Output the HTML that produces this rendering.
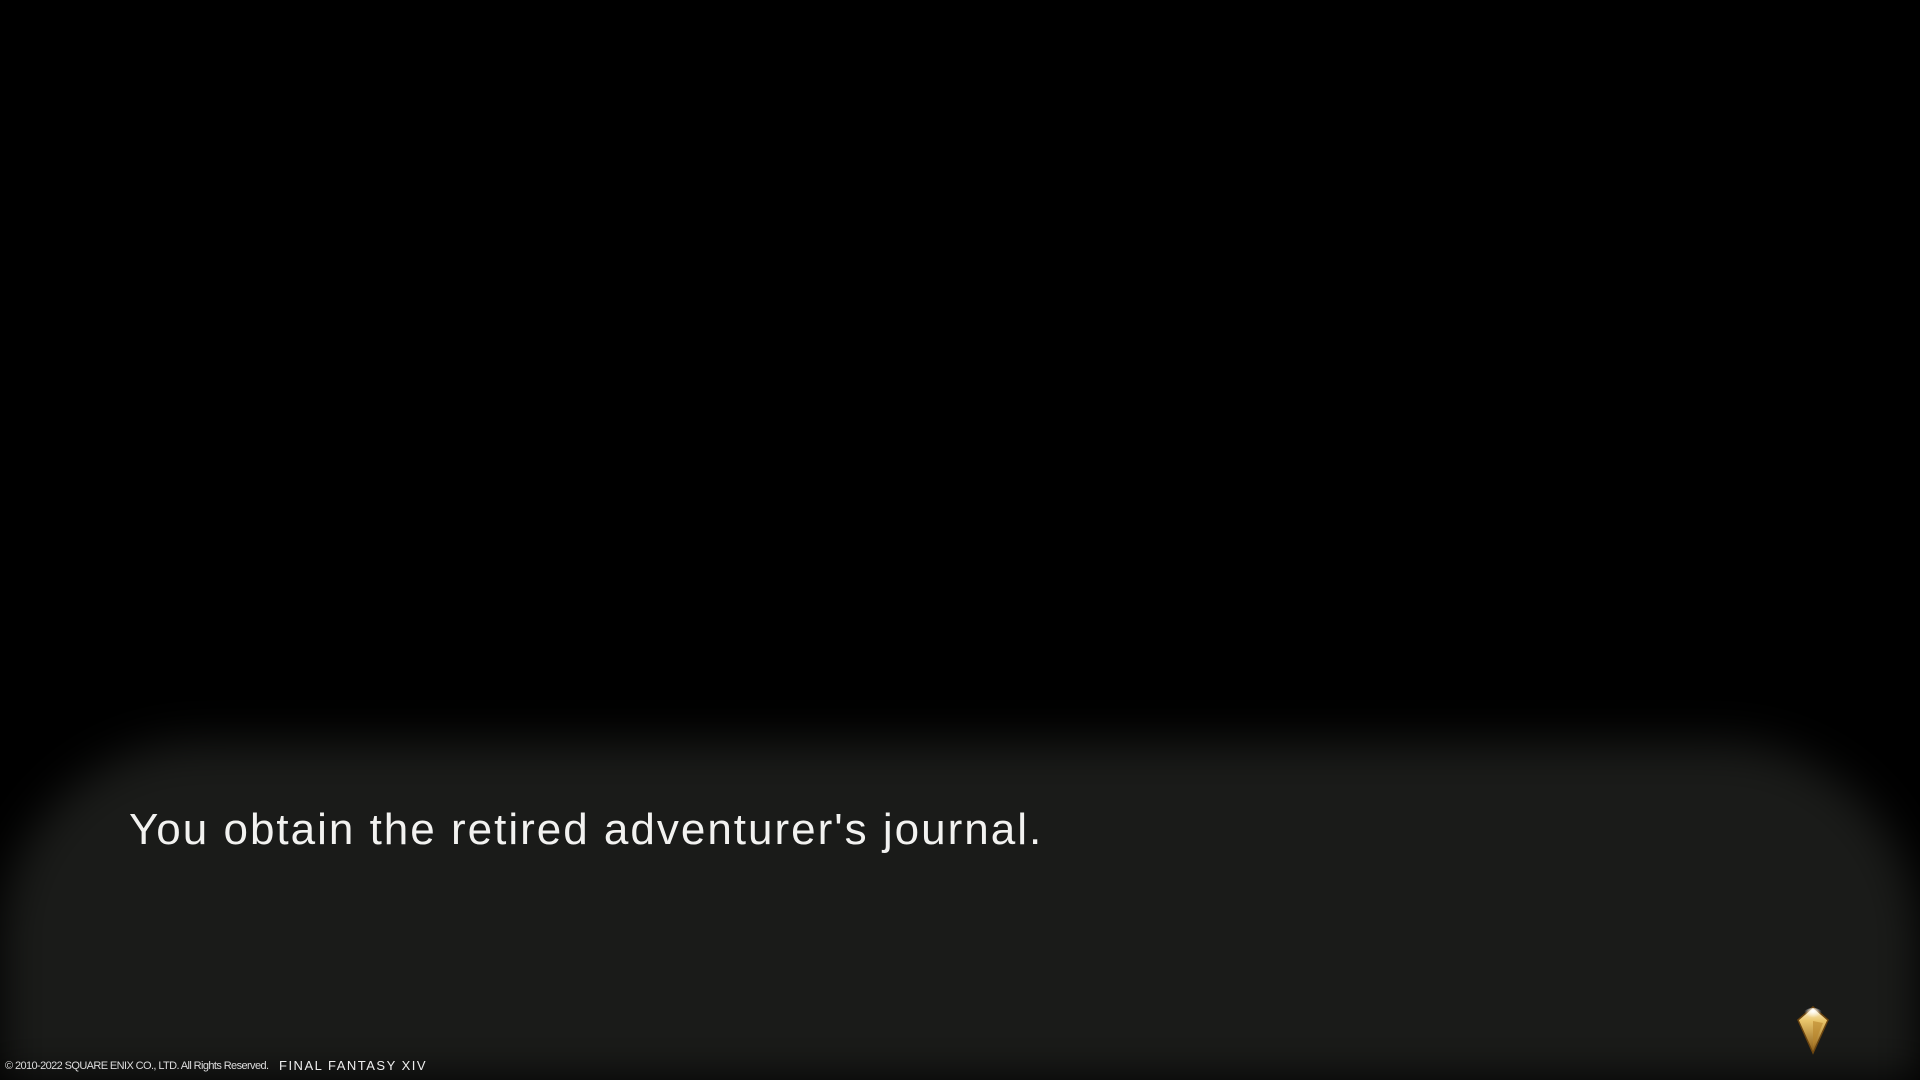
<!DOCTYPE html>
<html><head><style>
html,body{margin:0;padding:0;width:1920px;height:1080px;background:#000;overflow:hidden;position:relative;font-family:"Liberation Sans",sans-serif}
.clip{position:absolute;left:0;top:0;width:1920px;height:1080px;overflow:hidden}
.panel{position:absolute;left:0;top:742px;width:1920px;height:338px;background:#1a1b19;border-radius:200px 200px 0 0;filter:blur(22px)}
.msg{position:absolute;left:129px;top:805px;font-size:44px;color:#f2f2f0;letter-spacing:2px;white-space:nowrap}
.copy{position:absolute;left:5px;top:1060px;font-size:11px;color:#ddd;letter-spacing:-0.6px;white-space:nowrap}
.ff{position:absolute;left:279px;top:1058px;font-size:13px;color:#eee;letter-spacing:1.5px;white-space:nowrap}
.gem{position:absolute;left:1795px;top:1003px}
</style></head><body>
<div class="clip"><div class="panel"></div></div>
<div class="msg">You obtain the retired adventurer's journal.</div>
<div class="copy">© 2010-2022 SQUARE ENIX CO., LTD. All Rights Reserved.</div>
<div class="ff">FINAL FANTASY XIV</div>
<svg class="gem" width="36" height="54" viewBox="0 0 36 54">
<defs>
<linearGradient id="g" x1="0" y1="0" x2="0" y2="1">
<stop offset="0" stop-color="#fff8e0"/><stop offset="0.3" stop-color="#e8c46a"/><stop offset="1" stop-color="#8a5a14"/></linearGradient>
<radialGradient id="h" cx="0.5" cy="0.2" r="0.4"><stop offset="0" stop-color="#fff" stop-opacity="1"/><stop offset="1" stop-color="#fff" stop-opacity="0"/></radialGradient>
</defs>
<path d="M18 4 L33 17 L18 50 L3 17 Z" fill="url(#g)" stroke="#6b4510" stroke-width="1.5"/>
<path d="M18 18 L28 20 L18 44 Z" fill="#b9862c" opacity="0.6"/>
<ellipse cx="18" cy="13" rx="11" ry="8" fill="url(#h)"/>
</svg>
</body></html>
